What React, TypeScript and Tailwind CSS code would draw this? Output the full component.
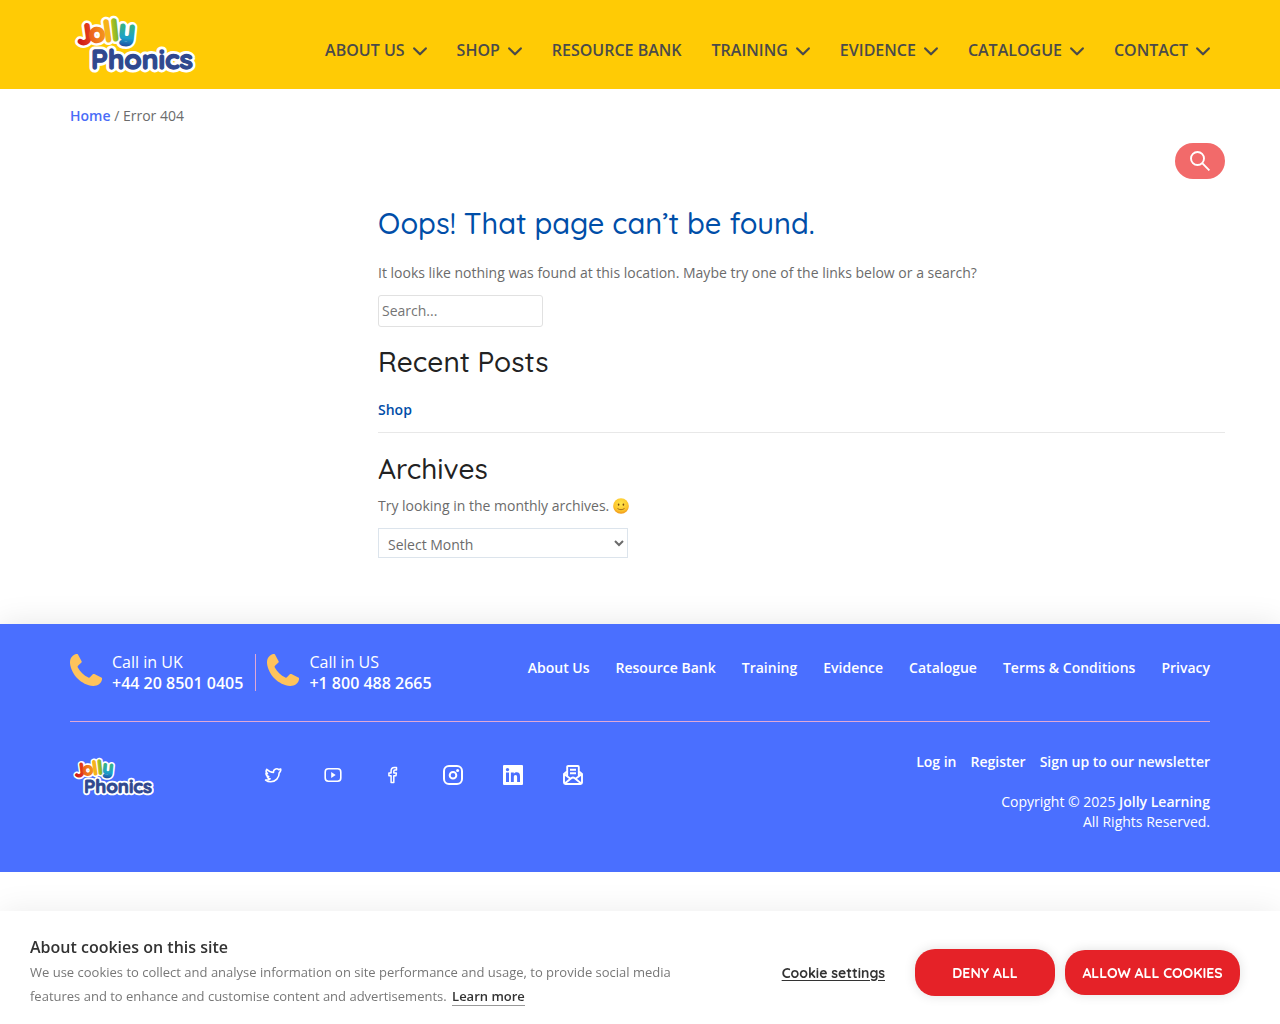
import { useState } from "react";

const navItems = [
  { label: "ABOUT US", menu: true },
  { label: "SHOP", menu: true },
  { label: "RESOURCE BANK", menu: false },
  { label: "TRAINING", menu: true },
  { label: "EVIDENCE", menu: true },
  { label: "CATALOGUE", menu: true },
  { label: "CONTACT", menu: true },
];

const phones = [
  { label: "Call in UK", number: "+44 20 8501 0405" },
  { label: "Call in US", number: "+1 800 488 2665" },
];

const footerLinks = ["About Us", "Resource Bank", "Training", "Evidence", "Catalogue", "Terms & Conditions", "Privacy"];
const accountLinks = ["Log in", "Register", "Sign up to our newsletter"];

function Logo({ className, id }: { className: string; id: string }) {
  const letters = [
    { c: "J", x: 8, y: 33, r: -8, size: 28, fill: `url(#${id}-red)` },
    { c: "o", x: 20, y: 31, r: -8, size: 26, fill: `url(#${id}-orange)` },
    { c: "l", x: 35, y: 30, r: -8, size: 29, fill: "#f6b31a" },
    { c: "l", x: 42, y: 29, r: -6, size: 29, fill: `url(#${id}-green)` },
    { c: "y", x: 48, y: 27, r: 6, size: 28, fill: `url(#${id}-blue)` },
  ];
  return (
    <svg viewBox="0 0 126 64" className={className} role="img" aria-label="Jolly Phonics">
      <defs>
        <linearGradient id={`${id}-red`}><stop offset="0" stopColor="#c81418" /><stop offset="1" stopColor="#e9441c" /></linearGradient>
        <linearGradient id={`${id}-orange`}><stop offset="0" stopColor="#ea5a1c" /><stop offset="1" stopColor="#f5991c" /></linearGradient>
        <linearGradient id={`${id}-green`}><stop offset="0" stopColor="#c5c51c" /><stop offset="1" stopColor="#6cb033" /></linearGradient>
        <linearGradient id={`${id}-blue`} x1="0" y1="0" x2="0" y2="1"><stop offset="0.45" stopColor="#35b08a" /><stop offset="0.75" stopColor="#1ba0cc" /><stop offset="1" stopColor="#20489c" /></linearGradient>
      </defs>
      {["outline", "fill"].map(layer => (
        <g key={layer} aria-hidden={layer === "outline"} fontFamily="Quicksand, Lato, sans-serif" fontWeight="700" strokeLinejoin="round" strokeLinecap="round">
          {letters.map((l, i) => (
            <text key={i} x={l.x} y={l.y} fontSize={l.size} transform={`rotate(${l.r} ${l.x} ${l.y})`}
              fill={layer === "outline" ? "#fff" : l.fill}
              stroke={layer === "outline" ? "#fff" : l.fill} strokeWidth={layer === "outline" ? 7 : 2}>
              {l.c}
            </text>
          ))}
          <text x="21" y="57" fontSize="28"
            fill={layer === "outline" ? "#fff" : "#2f488f"}
            stroke={layer === "outline" ? "#fff" : "#2f488f"} strokeWidth={layer === "outline" ? 7 : 1.3}>
            Phonics
          </text>
        </g>
      ))}
    </svg>
  );
}

function Chevron() {
  return (
    <svg viewBox="0 0 14 9" className="mt-0.5 h-[9px] w-[14px]" fill="none" stroke="currentColor" strokeWidth="2.2" strokeLinecap="round" strokeLinejoin="round" aria-hidden="true">
      <path d="M1.2 1.4 7 7.3l5.8-5.9" />
    </svg>
  );
}

function Phone() {
  return (
    <svg viewBox="0 0 32 32" className="size-8" fill="#ffc35b" aria-hidden="true">
      <path d="M8 .4 11.6 7.200c.3.7.2 1.100-.4 1.600L8 11.700c-.5.500-.5 1-.2 1.700 2.200 4.300 6 7.900 10.600 10.100.6.300 1.100.2 1.500-.2l2.900-3c.5-.5 1-.5 1.600-.2l6.900 3.300c.7.400.9.900.8 1.600C31.500 29.500 27.800 32 23.200 31.900 11.500 31 1 20.500 0 8.900-.2 4.300 2.500.7 6.500 0c.7-.1 1.200-.1 1.500.4Z" />
    </svg>
  );
}

const socials = [
  {
    name: "Twitter",
    icon: (
      <path fill="none" stroke="currentColor" strokeWidth="1.6" strokeLinejoin="round" d="M17.700 4.100c-.7.3-1.200.4-1.900.5-1-.9-2.500-1.100-3.700-.4-1.200.6-1.800 1.800-1.600 3.200-2.800 0-5-1.200-6.800-3.100-.9 1.600-.5 3.400.8 4.400L3 8.300c0 1.700 1.100 2.900 2.700 3.300l-1.500.1c.5 1.300 1.500 2.100 2.900 2.200-1.300.9-2.900 1.300-4.500 1.100 1.600 1.200 3.300 1.700 5.100 1.700 5 0 8.600-4 8.500-8.900.7-.6 1.200-1.300 1.500-2.200Z" />
    ),
  },
  {
    name: "YouTube",
    icon: (
      <>
        <rect x="2.2" y="3.7" width="15.6" height="12.6" rx="3.2" fill="none" stroke="currentColor" strokeWidth="1.6" />
        <path d="m8.200 7.100 4.500 2.900-4.500 2.900Z" />
      </>
    ),
  },
  {
    name: "Facebook",
    icon: (
      <path fill="none" stroke="currentColor" strokeWidth="1.5" strokeLinejoin="round" d="M8.100 17.500v-6.800H5.900V7.900h2.200V5.700c0-1.900 1.200-3.200 3.100-3.200h2.300v2.600h-1.500c-.8 0-1.200.4-1.200 1.200v1.600h2.600l-.4 2.800h-2.200v6.800Z" />
    ),
  },
  {
    name: "Instagram",
    icon: (
      <>
        <rect x="1" y="1" width="18" height="18" rx="5" fill="none" stroke="currentColor" strokeWidth="2" />
        <circle cx="10" cy="10.2" r="3.3" fill="none" stroke="currentColor" strokeWidth="2" />
        <circle cx="14.6" cy="5.6" r="1.5" />
      </>
    ),
  },
  {
    name: "LinkedIn",
    icon: (
      <path fillRule="evenodd" d="M1 0h18a1 1 0 0 1 1 1v18a1 1 0 0 1-1 1H1a1 1 0 0 1-1-1V1a1 1 0 0 1 1-1Zm2 7.500V17h3V7.500Zm1.500-4.600a1.700 1.700 0 1 0 0 3.400 1.700 1.700 0 0 0 0-3.400ZM7.900 7.500V17h2.900v-4.900c0-1.300.5-2.200 1.700-2.200s1.600.9 1.600 2.200V17H17v-5.600c0-2.700-1-4.100-3.300-4.100-1.400 0-2.400.6-2.900 1.500V7.500Z" />
    ),
  },
  {
    name: "Newsletter",
    icon: (
      <g fill="none" stroke="currentColor" strokeWidth="1.9" strokeLinejoin="round">
        <path d="M4 6.500 1 9v8.500c0 .9.600 1.500 1.500 1.500h15c.9 0 1.500-.6 1.500-1.500V9l-3-2.500M4.200 11.300V1.900c0-.5.400-.9.900-.9h9.800c.5 0 .9.400.9.900v9.400M7 4.800h6M7 8.300h6M1 9l6.800 5M19 9l-6.800 5M1.700 18.500l6.500-5.300c1.100-.9 2.500-.9 3.600 0l6.500 5.300" />
      </g>
    ),
  },
];

export default function App() {
  const [month, setMonth] = useState("");

  return (
    <div className="bg-white font-['Open_Sans',sans-serif] text-sm leading-5 text-[#6b6b6b]">
      <header className="bg-[#ffcb05]">
        <div className="mx-auto flex max-w-[1140px] items-center justify-between pt-3 pb-[13px]">
          <a href="#home"><Logo id="top" className="h-16 w-[126px]" /></a>
          <nav className="flex gap-[30px] pt-3 text-base font-semibold text-[#4a4a4a]">
            {navItems.map(n => (
              <a key={n.label} href="#nav" className="flex items-center gap-2">
                {n.label}
                {n.menu && <Chevron />}
              </a>
            ))}
          </nav>
        </div>
      </header>

      <main className="mx-auto max-w-[1170px] pb-[66px]">
        <div className="px-[15px] pt-[17px]">
          <a href="#home" className="font-semibold text-[#4a6cf7]">Home</a> / Error 404
        </div>
        <div className="mt-[17px] flex justify-end">
          <button aria-label="Open search" className="flex h-9 w-[50px] items-center justify-center rounded-[18px] bg-[#f26a6a] text-white">
            <svg viewBox="0 0 20 20" className="size-5" fill="none" stroke="currentColor" strokeWidth="1.9" aria-hidden="true">
              <circle cx="7.5" cy="7.5" r="6.5" />
              <path d="m12.200 12.200 7.200 7.200" />
            </svg>
          </button>
        </div>

        <section className="ml-[323px] pt-6">
          <h1 className="font-['Quicksand',Lato,sans-serif] text-[29px] leading-10 font-medium text-[#004ea8]">Oops! That page can’t be found.</h1>
          <p className="mt-5">It looks like nothing was found at this location. Maybe try one of the links below or a search?</p>
          <input type="search" aria-label="Search" placeholder="Search..."
            className="mt-3 block h-8 w-[165px] rounded-[3px] border border-[#e1e1e1] px-[3px] pb-0.5 placeholder:text-[#757575]" />

          <h2 className="mt-4 font-['Quicksand',Lato,sans-serif] text-[28px] leading-[38px] font-medium text-[#222]">Recent Posts</h2>
          <ul className="mt-[19px] border-b border-[#e8e8e8] pb-3">
            <li><a href="#shop" className="font-semibold text-[#004ea8]">Shop</a></li>
          </ul>

          <h2 className="mt-[17px] font-['Quicksand',Lato,sans-serif] text-[28px] leading-[38px] font-medium text-[#222]">Archives</h2>
          <p className="mt-2 flex items-center gap-1">
            Try looking in the monthly archives.
            <svg viewBox="0 0 16 16" className="size-4" role="img" aria-label="smile">
              <defs>
                <radialGradient id="face" cx="0.5" cy="0.35" r="0.65">
                  <stop offset="0" stopColor="#ffe64a" />
                  <stop offset="0.7" stopColor="#fdc52b" />
                  <stop offset="1" stopColor="#ee9418" />
                </radialGradient>
              </defs>
              <circle cx="8" cy="8" r="7.8" fill="url(#face)" />
              <ellipse cx="5.6" cy="6.6" rx="0.8" ry="1.2" fill="#7a4b12" />
              <ellipse cx="10.4" cy="6.6" rx="0.8" ry="1.2" fill="#7a4b12" />
              <path d="M4.800 10.700c1.800 1.400 4.600 1.400 6.400 0" fill="none" stroke="#8a5614" strokeWidth="0.8" strokeLinecap="round" />
            </svg>
          </p>
          <select aria-label="Archives" value={month} onChange={e => setMonth(e.target.value)}
            className="mt-3 block h-[30px] w-[250px] border border-[#dce4ec] bg-white pt-0.5 pl-[5px] text-[#6b6b6b]">
            <option value="">Select Month</option>
          </select>
        </section>
      </main>

      <footer className="bg-[#4a6fff] pb-10 text-white shadow-[0_0_30px_rgba(0,0,0,0.1)]">
        <div className="mx-auto max-w-[1140px]">
          <div className="flex items-start justify-between border-b border-[#e0a8d6] pt-[30px] pb-[30px]">
            <div className="flex">
              {phones.map(p => (
                <div key={p.number} className="flex h-[37px] gap-[10px] border-[#e0a8d6] not-last:mr-[11px] not-last:border-r not-last:pr-3">
                  <Phone />
                  <div className="-mt-[2px] text-base leading-[21px]">
                    <div>{p.label}</div>
                    <a href="#call" className="block font-semibold">{p.number}</a>
                  </div>
                </div>
              ))}
            </div>
            <nav className="flex gap-[26px] pt-1 font-semibold">
              {footerLinks.map(l => <a key={l} href="#footer">{l}</a>)}
            </nav>
          </div>

          <div className="flex items-start justify-between pt-[30px]">
            <div className="flex items-start">
              <a href="#home"><Logo id="bottom" className="mt-[2px] h-[45px] w-[84px]" /></a>
              <div className="ml-[109px] flex gap-10 pt-[13px]">
                {socials.map(s => (
                  <a key={s.name} href="#social" aria-label={s.name}>
                    <svg viewBox="0 0 20 20" className="size-5" fill="currentColor" aria-hidden="true">{s.icon}</svg>
                  </a>
                ))}
              </div>
            </div>
            <div className="text-right">
              <div className="flex justify-end gap-[14px] font-semibold">
                {accountLinks.map(l => <a key={l} href="#account">{l}</a>)}
              </div>
              <p className="mt-5">
                Copyright © 2025 <a href="#learning" className="font-semibold">Jolly Learning</a>
                <br />
                All Rights Reserved.
              </p>
            </div>
          </div>
        </div>
      </footer>

      <div role="dialog" aria-label="About cookies on this site"
        className="fixed inset-x-0 bottom-0 flex items-center justify-between bg-white pt-6 pr-10 pb-4 pl-[30px] shadow-[0_0_30px_rgba(0,0,0,0.08)]">
        <div className="max-w-[660px]">
          <h3 className="text-base leading-[25px] font-semibold text-[#333]">About cookies on this site</h3>
          <p className="text-[13px] leading-6 text-[#777]">
            We use cookies to collect and analyse information on site performance and usage, to provide social media features and to enhance and customise content and advertisements.{" "}
            <a href="#more" className="ml-0.5 inline-block border-b border-[#999] leading-[18px] font-semibold text-[#333]">Learn more</a>
          </p>
        </div>
        <div className="flex items-center gap-[10px] pt-0.5 font-['Quicksand',Lato,sans-serif] text-sm font-bold text-white">
          <button className="mr-5 text-[#333] underline underline-offset-2">Cookie settings</button>
          <button className="h-[47px] w-[140px] rounded-[20px] bg-[#e52228] shadow-[0_0_12px_rgba(0,0,0,0.12)]">DENY ALL</button>
          <button className="h-[45px] w-[175px] rounded-[20px] bg-[#e52228] shadow-[0_0_12px_rgba(0,0,0,0.12)]">ALLOW ALL COOKIES</button>
        </div>
      </div>
    </div>
  );
}
